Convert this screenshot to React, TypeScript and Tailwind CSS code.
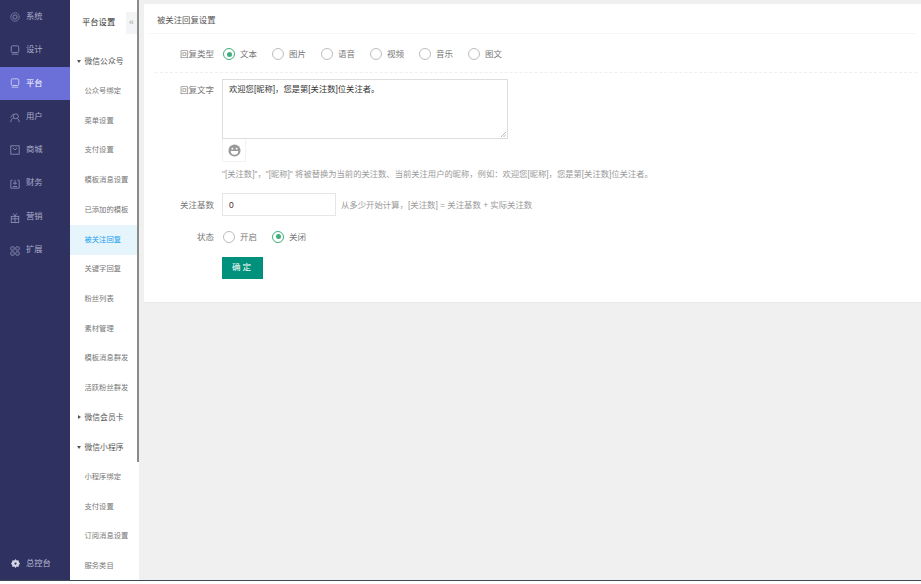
import React from 'react';

const font = { fontFamily: '"Liberation Sans", "Noto Sans CJK SC", sans-serif' };

function Icon({ name, active }: { name: string; active?: boolean }) {
  const cls = `w-[10px] h-[10px] shrink-0 ${active ? 'text-[#d4d6f5]' : 'text-[#8f93b8]'}`;
  const common = { viewBox: '0 0 12 12', fill: 'none', stroke: 'currentColor', strokeWidth: 1, className: cls };
  switch (name) {
    case 'sys':
      return <svg {...common}><circle cx="6" cy="6" r="5" strokeDasharray="2 .6" /><circle cx="6" cy="6" r="2.500" /></svg>;
    case 'design':
    case 'platform':
      return <svg {...common}><rect x="1.500" y="1" width="9" height="8" rx="1.500" /><path d="M2 11h8" /></svg>;
    case 'user':
      return <svg {...common} className={`${cls} mt-[3px]`}><circle cx="7" cy="4" r="3" /><path d="M1 11c0-3 1.500-4.500 3.500-5M11 11c0-2-.7-3.500-2-4.500M1 5.500C1.500 3.500 3 2 4.500 1.500" /></svg>;
    case 'shop':
      return <svg {...common}><rect x="1" y="1" width="10" height="10" /><path d="M3.500 3.500L6 6l2.500-2.500" /></svg>;
    case 'finance':
      return <svg {...common} className={`${cls} mt-[2px]`}><path d="M3 1.500H1V11h10V1.500H9" /><path d="M6 1v6M3.500 5h5M3.500 9h5" /></svg>;
    case 'market':
      return <svg {...common} className={`${cls} mt-[4px]`}><rect x="1.500" y="4" width="9" height="7.500" /><path d="M1.500 7h9M6 4v7.500M4 .5L6 4l2-3.500" /></svg>;
    default:
      return <svg {...common} className={`${cls} mt-[2px]`}><rect x="1" y="1" width="4" height="4" rx="1" /><rect x="7" y="1" width="4" height="4" rx="1" /><rect x="1" y="7" width="4" height="4" rx="1" /><rect x="7" y="7" width="4" height="4" rx="1" /></svg>;
  }
}

const mainNav = [
  ['sys', '系统'],
  ['design', '设计'],
  ['platform', '平台'],
  ['user', '用户'],
  ['shop', '商城'],
  ['finance', '财务'],
  ['market', '营销'],
  ['ext', '扩展'],
];

type SubItem = { label: string; group?: 'open' | 'closed'; active?: boolean };

const subNav: SubItem[] = [
  { label: '微信公众号', group: 'open' },
  { label: '公众号绑定' },
  { label: '菜单设置' },
  { label: '支付设置' },
  { label: '模板消息设置' },
  { label: '已添加的模板' },
  { label: '被关注回复', active: true },
  { label: '关键字回复' },
  { label: '粉丝列表' },
  { label: '素材管理' },
  { label: '模板消息群发' },
  { label: '活跃粉丝群发' },
  { label: '微信会员卡', group: 'closed' },
  { label: '微信小程序', group: 'open' },
  { label: '小程序绑定' },
  { label: '支付设置' },
  { label: '订阅消息设置' },
  { label: '服务类目' },
];

function Radio({ label, checked }: { label: string; checked?: boolean }) {
  return (
    <div className="flex items-center">
      <span className={`w-[12px] h-[12px] rounded-full border flex items-center justify-center bg-white ${checked ? 'border-[#3fae7c]' : 'border-[#bdbdbd]'}`}>
        {checked && <span className="w-[5px] h-[5px] rounded-full bg-[#3fae7c]" />}
      </span>
      <span className="ml-[5px] w-[17px] text-[#777] text-[8.500px] leading-none whitespace-nowrap">{label}</span>
    </div>
  );
}

function Row({ label, className, labelClass, children }: { label: string; className?: string; labelClass?: string; children: React.ReactNode }) {
  return (
    <div className={`flex ${className ?? ''}`}>
      <div className={`w-[59px] mr-[8px] text-right text-[#777] text-[8.500px] shrink-0 ${labelClass ?? ''}`}>{label}</div>
      <div>{children}</div>
    </div>
  );
}

export default function App() {
  return (
    <div className="w-[921px] h-[584px] flex flex-col overflow-hidden bg-white" style={font}>
      <div className="h-[580px] flex shrink-0 overflow-hidden bg-[#f0f0f0]">
        <aside className="w-[70px] h-full bg-[#2f3160] flex flex-col shrink-0">
          {mainNav.map(([icon, label]) => (
            <div key={icon} className={`h-[33.300px] flex items-center pl-[10px] ${label === '平台' ? 'bg-[#6a70d8] text-white' : 'text-[#a9acc9]'}`}>
              <Icon name={icon} active={label === '平台'} />
              <span className="ml-[6px] pb-[1px] text-[8.300px]">{label}</span>
            </div>
          ))}
          <div className="mt-auto h-[33px] flex items-center pl-[11px] text-[#b9bcd6]">
            <svg viewBox="0 0 12 12" className="w-[9px] h-[9px] text-[#d5d6e6]" fill="currentColor"><path d="M6 0l1.500 2 2.500-.5.500 2.500L12 6l-1.500 2-.5 2.500-2.500-.5L6 12l-1.500-2-2.500.5L1.500 8 0 6l1.500-2L2 1.500 4.500 2z" /><circle cx="6" cy="6" r="1.500" fill="#2f3160" /></svg>
            <span className="ml-[6px] text-[8.300px]">总控台</span>
          </div>
        </aside>

        <nav className="w-[69px] h-full bg-white shrink-0 flex overflow-hidden">
          <div className="w-[67px]">
            <div className="h-[47px] flex items-center justify-between">
              <span className="ml-[12px] pb-[2px] text-[8.300px] text-[#333]">平台设置</span>
              <span className="w-[11px] h-[22px] mb-[2px] bg-[#f2f4f5] text-[#aaa] text-[9px] flex items-center justify-center">«</span>
            </div>
            {subNav.map((item, i) => (
              <div key={i} className={`h-[29.700px] flex items-center whitespace-nowrap pl-[14.500px] relative ${item.group ? 'text-[7.800px]' : 'text-[7.300px]'} ${item.active ? 'bg-[#e6f4fc] text-[#1aa0ec]' : item.group ? 'text-[#555]' : 'text-[#777]'}`}>
                {item.group === 'open' && <span className="absolute left-[7px] top-[13px] border-x-[2.500px] border-x-transparent border-t-[3px] border-t-[#555]" />}
                {item.group === 'closed' && <span className="absolute left-[8px] top-[12px] border-y-[2.500px] border-y-transparent border-l-[3px] border-l-[#555]" />}
                {item.label}
              </div>
            ))}
          </div>
          <div className="w-[2px] h-[462px] bg-[#8a8a8a]" />
        </nav>

        <main className="flex-1 min-w-0 pl-[5px] pt-[4px]">
          <div className="h-[299px] bg-white border-b border-[#e8e8e8]">
            <div className="h-[30px] mx-[5px] pt-[3px] border-b border-[#f5f5f5] flex items-center pl-[8px] text-[8.400px] text-[#555]">被关注回复设置</div>
            <div className="ml-[11px] mr-[4px]">
              <Row label="回复类型" className="h-[39px] pt-[2px] items-center border-b border-dashed border-[#efefef]">
                <div className="flex gap-[15px] ml-[1px]">
                  <Radio label="文本" checked />
                  <Radio label="图片" />
                  <Radio label="语音" />
                  <Radio label="视频" />
                  <Radio label="音乐" />
                  <Radio label="图文" />
                </div>
              </Row>
              <Row label="回复文字" labelClass="pt-[5px]" className="mt-[6px]">
                <div className="w-[286px] h-[60px] border border-[#ddd] relative pl-[6px] pt-[3px] text-[8.300px] text-[#333]">
                  欢迎您[昵称]，您是第[关注数]位关注者。
                  <svg viewBox="0 0 6 6" className="absolute right-[1px] bottom-[1px] w-[5px] h-[5px] text-[#888]" stroke="currentColor" fill="none" strokeWidth="0.7"><path d="M0 6L6 0M3 6L6 3" /></svg>
                </div>
                <div className="w-[24px] h-[23px] border-x border-b border-[#f3f3f3] flex items-center justify-center">
                  <svg viewBox="0 0 14 14" className="w-[13px] h-[13px]"><circle cx="7" cy="7" r="6.500" fill="#9a9a9a" /><circle cx="4.700" cy="5" r="1" fill="#fff" /><circle cx="9.300" cy="5" r="1" fill="#fff" /><path d="M3 7.500h8a4 4 0 0 1-8 0z" fill="#fff" /></svg>
                </div>
                <p className="mt-[6px] text-[8.300px] text-[#999] whitespace-nowrap">"[关注数]"，"[昵称]" 将被替换为当前的关注数、当前关注用户的昵称，例如：欢迎您[昵称]，您是第[关注数]位关注者。</p>
              </Row>
              <Row label="关注基数" labelClass="pt-[1px]" className="mt-[13px] items-center">
                <div className="flex items-center">
                  <div className="w-[114px] h-[23px] border border-[#e6e6e6] flex items-center pl-[6px] text-[8.500px] text-[#4a2a2a]">0</div>
                  <span className="ml-[5px] text-[8.400px] text-[#999] whitespace-nowrap">从多少开始计算，[关注数] = 关注基数 + 实际关注数</span>
                </div>
              </Row>
              <Row label="状态" className="mt-[9px] items-center h-[23px]">
                <div className="flex gap-[15px] ml-[1px]">
                  <Radio label="开启" />
                  <Radio label="关闭" checked />
                </div>
              </Row>
              <Row label="" className="mt-[5px]">
                <button className="w-[41px] h-[22px] bg-[#00917c] text-white text-[8.500px] tracking-[2px]">确定</button>
              </Row>
            </div>
          </div>
        </main>
      </div>
      <div className="h-px shrink-0 bg-[#3c4a50]" />
    </div>
  );
}
